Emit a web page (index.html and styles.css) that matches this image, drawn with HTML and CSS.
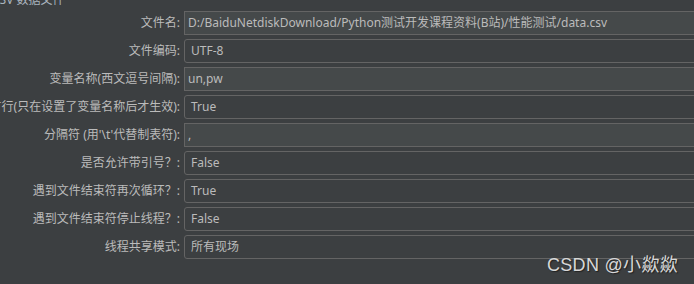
FILE: index.html
```html
<!doctype html>
<html>

<head>
	<meta charset="UTF-8">
	<title>CSV 数据文件设置</title>
	<link rel="stylesheet" href="styles.css">
</head>

<body>
	<div class="panel">
		<div class="panel_title">CSV 数据文件</div>
		<div class="form">
			<label><span>文件名:</span></label>
			<div class="txt">D:/BaiduNetdiskDownload/Python测试开发课程资料(B站)/性能测试/data.csv</div>

			<label><span>文件编码:</span></label>
			<div class="combo">UTF-8</div>

			<label><span>变量名称(西文逗号间隔):</span></label>
			<div class="txt">un,pw</div>

			<label><span>忽略首行(只在设置了变量名称后才生效):</span></label>
			<div class="combo">True</div>

			<label><span>分隔符 (用'\t'代替制表符):</span></label>
			<div class="txt">,</div>

			<label><span>是否允许带引号？:</span></label>
			<div class="combo">False</div>

			<label><span>遇到文件结束符再次循环？:</span></label>
			<div class="combo">True</div>

			<label><span>遇到文件结束符停止线程？:</span></label>
			<div class="combo">False</div>

			<label><span>线程共享模式:</span></label>
			<div class="combo">所有现场</div>
		</div>
	</div>
	<div class="mark">CSDN @小歘歘</div>
</body>

</html>
```

FILE: styles.css
```css
body {
	margin: 0;
	background: #3c3f41;
	color: #bbbbbb;
	font-family: "Noto Sans", "Noto Sans CJK SC", sans-serif;
	font-size: 12px;
	overflow: hidden;
}

.panel {
	width: 720px;
}

.panel_title {
	height: 11px;
	line-height: 14px;
	margin-top: -7px;
	margin-bottom: 0;
	margin-left: -8px;
	color: #a9b3bd;
	white-space: nowrap;
}

.form {
	display: grid;
	grid-template-columns: 180px 1fr;
	column-gap: 4px;
	row-gap: 4px;
	padding-top: 7px;
}

.form label {
	display: flex;
	justify-content: flex-end;
	height: 24px;
	line-height: 24px;
	white-space: nowrap;
	overflow: hidden;
}

.form label span {
	flex: none;
}

.txt,
.combo {
	box-sizing: border-box;
	height: 24px;
	line-height: 22px;
	border: 1px solid #646464;
	white-space: nowrap;
	overflow: hidden;
}

.txt {
	background: #45494a;
	padding-left: 3px;
}

.combo {
	background: #3c3f41;
	border-radius: 3px;
	padding-left: 6px;
}

.mark {
	position: absolute;
	left: 547px;
	top: 250px;
	font-family: "Liberation Sans", "Noto Sans CJK SC", sans-serif;
	font-size: 18px;
	color: #d8d8d8;
	text-shadow: 1px 1px 1px #222;
	letter-spacing: 0.3px;
}
```
